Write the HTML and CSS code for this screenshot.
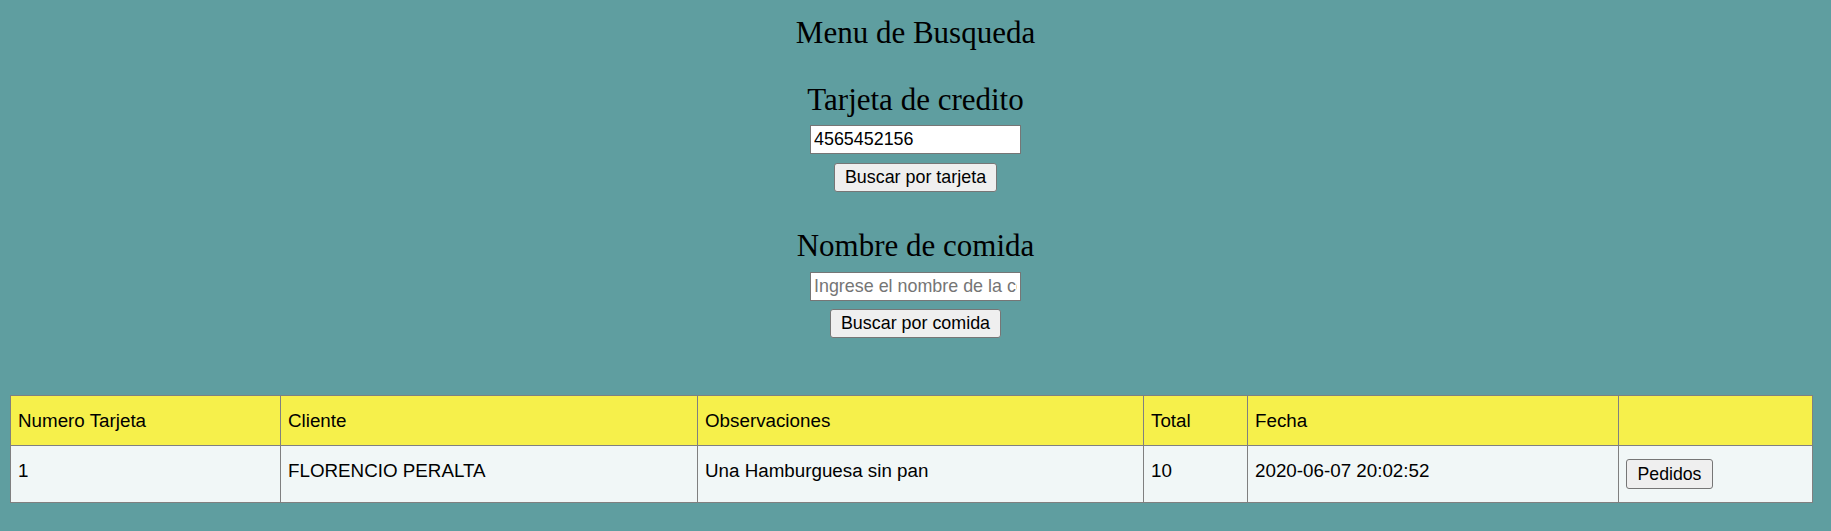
FILE: index.html
```html
<!DOCTYPE html>
<html lang="es">
<head>
<meta charset="utf-8">
<title>Menu de Busqueda</title>
<link rel="stylesheet" href="styles.css">
</head>
<body>
<main class="page">
  <section class="search">
    <h2 class="title">Menu de Busqueda</h2>
    <h2 class="label label-first">Tarjeta de credito</h2>
    <input class="field field-first" type="text" value="4565452156">
    <button class="btn btn-first" type="button">Buscar por tarjeta</button>
    <h2 class="label label-second">Nombre de comida</h2>
    <input class="field field-second" type="text" placeholder="Ingrese el nombre de la comida">
    <button class="btn btn-second" type="button">Buscar por comida</button>
  </section>
  <table class="orders">
    <colgroup>
      <col class="col-num">
      <col class="col-client">
      <col class="col-obs">
      <col class="col-total">
      <col class="col-date">
      <col class="col-action">
    </colgroup>
    <thead>
      <tr>
        <th>Numero Tarjeta</th>
        <th>Cliente</th>
        <th>Observaciones</th>
        <th>Total</th>
        <th>Fecha</th>
        <th></th>
      </tr>
    </thead>
    <tbody>
      <tr>
        <td>1</td>
        <td>FLORENCIO PERALTA</td>
        <td>Una Hamburguesa sin pan</td>
        <td>10</td>
        <td>2020-06-07 20:02:52</td>
        <td><button class="btn btn-row" type="button">Pedidos</button></td>
      </tr>
    </tbody>
  </table>
</main>
</body>
</html>
```

FILE: styles.css
```css
html, body {
  margin: 0;
  padding: 0;
}

body {
  background: #5f9ea0;
  color: #000;
  font-family: "Liberation Sans", Arial, sans-serif;
}

.search {
  display: flex;
  flex-direction: column;
  align-items: center;
  padding-top: 15px;
}

.title,
.label {
  margin: 0;
  font-family: "Liberation Serif", "Times New Roman", serif;
  font-weight: normal;
  font-size: 31px;
  line-height: 36px;
}

.label-first {
  margin-top: 30.5px;
}

.label-second {
  margin-top: 35.5px;
}

.field {
  box-sizing: border-box;
  width: 211px;
  height: 29px;
  margin: 0;
  padding: 0 3px;
  border: 1px solid #767676;
  border-radius: 0;
  background: #fff;
  color: #000;
  font-family: "Liberation Sans", Arial, sans-serif;
  font-size: 17.9px;
  outline: none;
}

.field::placeholder {
  color: #757575;
}

.field-first {
  margin-top: 7.5px;
}

.field-second {
  margin-top: 8.5px;
}

.btn {
  box-sizing: border-box;
  height: 29px;
  margin: 0;
  padding: 0 10px;
  border: 1px solid #767676;
  border-radius: 3px;
  background: #efefef;
  color: #000;
  font-family: "Liberation Sans", Arial, sans-serif;
  font-size: 17.9px;
  line-height: 21px;
}

.btn-first {
  margin-top: 9px;
}

.btn-second {
  margin-top: 7.5px;
}

.btn-row {
  height: 30px;
  padding: 0 10.5px;
  margin-top: -1px;
  font-size: 17.7px;
  vertical-align: top;
}

.orders {
  border-collapse: collapse;
  table-layout: fixed;
  width: 1803px;
  margin: 57.5px 0 0 10px;
}

.col-num { width: 270px; }
.col-client { width: 417px; }
.col-obs { width: 446px; }
.col-total { width: 104px; }
.col-date { width: 371px; }
.col-action { width: 194px; }

.orders th,
.orders td {
  border: 1px solid #808080;
  padding: 14px 7px;
  text-align: left;
  vertical-align: top;
  font-weight: normal;
  font-size: 18.8px;
  line-height: 21px;
  white-space: nowrap;
}

.orders th {
  background: #f6f04b;
}

.orders td {
  background: #f1f7f7;
  padding-bottom: 13px;
}
```
